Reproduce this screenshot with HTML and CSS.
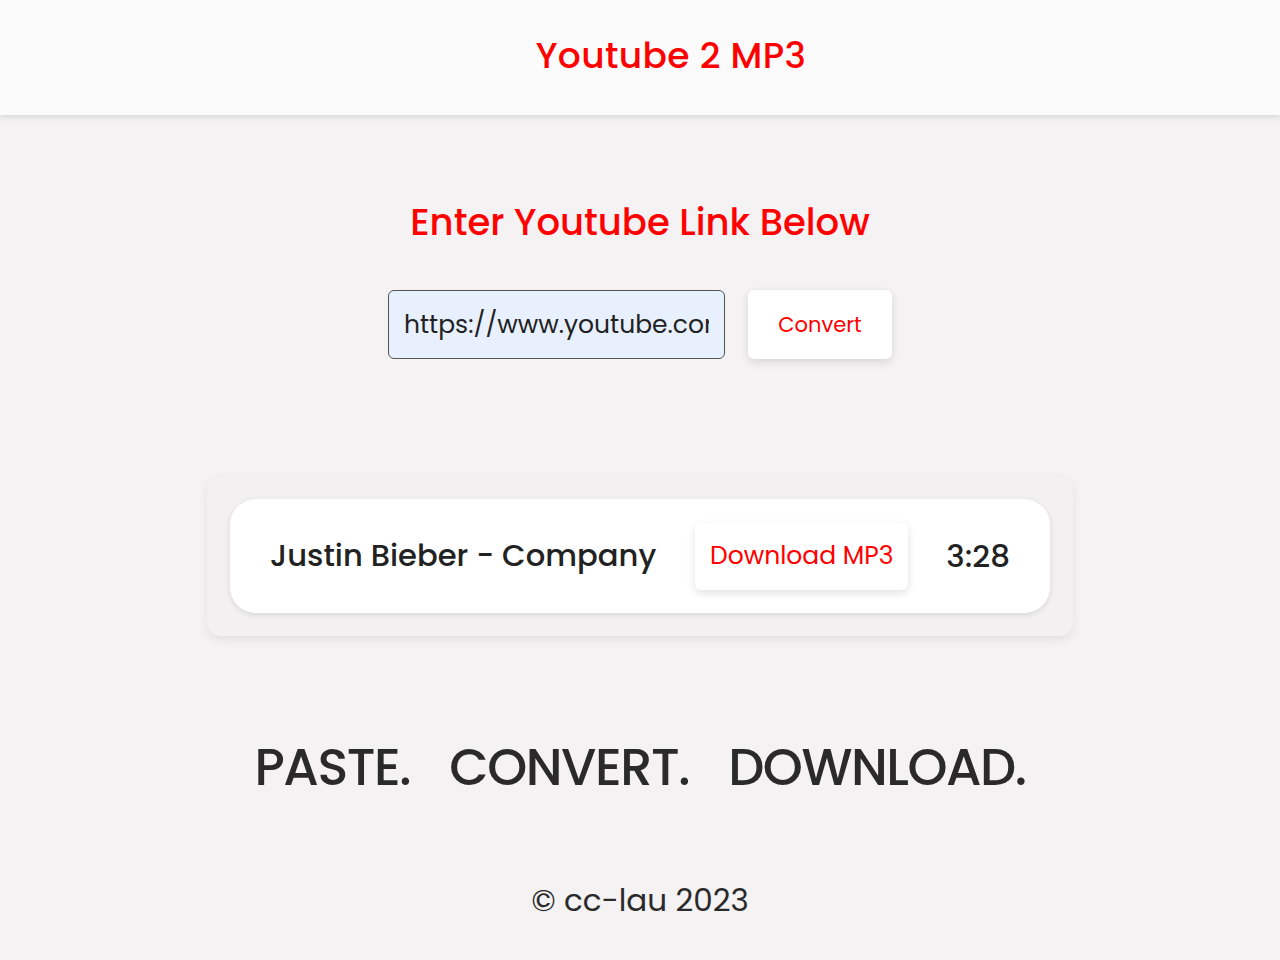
FILE: index.html
```html
<!DOCTYPE html>
<html>
<head>
<meta charset="utf-8">
<title>Youtube 2 MP3</title>
<link rel="stylesheet" href="styles.css">
</head>
<body>
<header class="header">
  <h1 class="brand">Youtube 2 MP3</h1>
</header>
<main class="main">
  <h2 class="prompt">Enter Youtube Link Below</h2>
  <form class="form">
    <input class="url" type="text" value="https://www.youtube.com/watch?v=gdx7gN1UyX0">
    <button class="btn convert" type="button">Convert</button>
  </form>
  <section class="results">
    <div class="result">
      <span class="title">Justin Bieber - Company</span>
      <button class="btn download" type="button">Download MP3</button>
      <span class="duration">3:28</span>
    </div>
  </section>
  <p class="slogan"><span>PASTE.</span><span>CONVERT.</span><span>DOWNLOAD.</span></p>
  <footer class="footer">© cc-lau 2023</footer>
</main>
</body>
</html>
```
FILE: styles.css
```css
* { box-sizing: border-box; }
html, body { margin: 0; padding: 0; }
body {
  background: #f4f2f3;
  font-family: "Poppins", "Inter", "Noto Sans", sans-serif;
  color: #2a2a2a;
  height: 960px;
  overflow: hidden;
}
.header {
  height: 115px;
  background: #fbfbfb;
  box-shadow: 0 2px 6px rgba(0,0,0,0.12);
  display: flex;
  align-items: center;
  justify-content: center;
}
.brand {
  margin: 0 0 4px 62px;
  color: #ff0000;
  font-size: 36px;
  font-weight: 500;
  letter-spacing: 0.4px;
}
.main {
  display: flex;
  flex-direction: column;
  align-items: center;
}
.prompt {
  margin: 84px 0 0;
  color: #ff0000;
  font-size: 37px;
  font-weight: 500;
  line-height: 46px;
}
.form {
  margin-top: 45px;
  display: flex;
  gap: 23px;
}
.url {
  width: 337px;
  height: 69px;
  background: #e8f0fe;
  border: 1px solid #555;
  border-radius: 6px;
  padding: 0 15px;
  font: inherit;
  font-size: 25px;
  color: #222;
  outline: none;
}
.btn {
  background: #fff;
  border: none;
  border-radius: 6px;
  box-shadow: 0 3px 8px rgba(0,0,0,0.12);
  color: #ff0000;
  font-family: inherit;
  cursor: pointer;
}
.convert {
  width: 144px;
  height: 69px;
  font-size: 21px;
}
.results {
  margin-top: 116px;
  width: 866px;
  height: 161px;
  background: #f2f0f1;
  border-radius: 14px;
  box-shadow: 0 4px 10px rgba(0,0,0,0.08);
  padding: 24px 23px;
}
.result {
  height: 114px;
  background: #fff;
  border-radius: 26px;
  box-shadow: 0 2px 6px rgba(0,0,0,0.1);
  display: flex;
  align-items: center;
  padding: 0 40px;
}
.title {
  font-size: 30.6px;
  color: #222;
  font-weight: 500;
  white-space: nowrap;
}
.download {
  margin-left: 39px;
  width: 215px;
  height: 67px;
  font-size: 25px;
  padding: 0;
}
.duration {
  margin-left: 38px;
  font-size: 31px;
  font-weight: 500;
  color: #222;
}
.slogan {
  margin: 101px 0 0;
  display: flex;
  gap: 39px;
  font-size: 51px;
  font-weight: 500;
  line-height: 60px;
  color: #2a2a2a;
  letter-spacing: -1.45px;
}
.footer {
  margin-top: 80px;
  font-size: 31px;
  color: #2a2a2a;
}
```
